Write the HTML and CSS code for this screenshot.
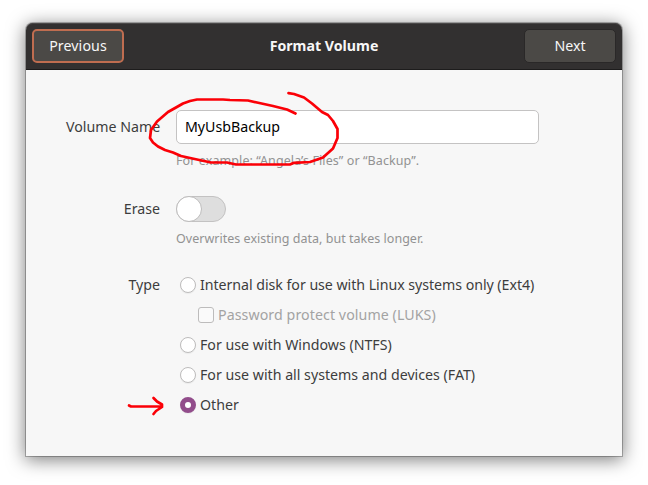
FILE: index.html
```
<!DOCTYPE html>
<html lang="en">
<head>
<meta charset="utf-8">
<title>Format Volume</title>
<link rel="stylesheet" href="styles.css">
</head>
<body>
<main class="window">
  <header class="titlebar">
    <button class="btn btn-focus"><span class="t-prev">Previous</span></button>
    <h1 class="title"><span class="t-title">Format Volume</span></h1>
    <button class="btn"><span class="t-next">Next</span></button>
  </header>
  <section class="form">
    <div class="label label-entry"><span class="t-name">Volume Name</span></div>
    <div class="entry"><span class="t-value">MyUsbBackup</span></div>
    <div class="hint hint-name"><span class="t-hint1">For example: “Angela’s Files” or “Backup”.</span></div>
    <div class="label"><span class="t-erase">Erase</span></div>
    <div class="switch"><div class="knob"></div></div>
    <div class="hint hint-erase"><span class="t-hint2">Overwrites existing data, but takes longer.</span></div>
    <div class="label label-type"><span class="t-type">Type</span></div>
    <div class="options">
      <div class="option"><i class="radio"></i><span class="t-ext">Internal disk for use with Linux systems only (Ext4)</span></div>
      <div class="option nested"><i class="check"></i><span class="t-luks">Password protect volume (LUKS)</span></div>
      <div class="option"><i class="radio"></i><span class="t-ntfs">For use with Windows (NTFS)</span></div>
      <div class="option"><i class="radio"></i><span class="t-fat">For use with all systems and devices (FAT)</span></div>
      <div class="option"><i class="radio selected"></i><span class="t-other">Other</span></div>
    </div>
  </section>
</main>
<svg class="marks" width="648" height="485" viewBox="0 0 648 485">
  <path d="M295.500 113.500L287 109.500 273 106 257 102.500 248 100.500 230 100 223 99.500H197L190 101 183 103.500 176 107.500 168 112 157 121.500 151 130 150 138 153 142.500 158 146.500 165 150 173 152.500 181 156 197 159.500 211 162.500H227L236 164.500H290L294 162.800 310 162 323 157.500 333 148.500 337.500 138V129L333 121 328 115 322 112 312 103.500 304 97.500 294 94 288.500 93.200"/>
  <path d="M129 405.500L131 406.500H161M153.500 398L157 401.500 162 404.500V407L156 411 153.500 414"/>
</svg>
</body>
</html>
```
FILE: styles.css
```
* { box-sizing: border-box; }
body {
  margin: 0;
  width: 648px;
  height: 485px;
  overflow: hidden;
  padding: 23px 26px 0;
  background: #fff;
  color: #3d3d3d;
  font: 14.2px/20px "Noto Sans", sans-serif;
}
.window {
  width: 596px;
  height: 433px;
  border-radius: 7px 7px 0 0;
  background: #f7f7f7;
  box-shadow: 0 0 0 1px rgba(0,0,0,.25), 0 3px 18px 1px rgba(0,0,0,.5);
}
.titlebar {
  display: flex;
  justify-content: space-between;
  align-items: center;
  height: 47px;
  padding: 0 6px 1px;
  border-radius: 7px 7px 0 0;
  border-bottom: 1px solid #1d1c1c;
  background: #323030;
  box-shadow: inset 0 1px #4a4848;
  color: #f7f7f7;
}
.btn {
  display: flex;
  align-items: center;
  justify-content: center;
  width: 92px;
  height: 34px;
  padding: 0;
  border: 1px solid #2a2828;
  border-radius: 5px;
  background: #4b4946;
  color: #f7f7f7;
  font: inherit;
}
.btn-focus { border: 2px solid #bf6d50; }
.title { margin: 0; font-size: 14.2px; font-weight: 700; line-height: 20px; }
.t-prev { letter-spacing: .1px; }
.t-ext { letter-spacing: -.04px; }
.t-luks { letter-spacing: .08px; }
.t-hint1 { letter-spacing: .09px; }
.t-hint2 { letter-spacing: .02px; }
.form {
  display: grid;
  grid-template-columns: 94px 363px;
  column-gap: 16px;
  padding: 40px 0 0 40px;
  align-items: start;
}
.label { text-align: right; line-height: 26px; }
.label-entry { line-height: 34px; }
.label-type { line-height: 30px; }
.entry {
  height: 34px;
  padding: 0 8px;
  border: 1px solid #c4c3c3;
  border-radius: 5px;
  background: #fff;
  color: #000;
  line-height: 32px;
}
.hint { grid-column: 2; color: #929292; font-size: 12.5px; line-height: 18px; }
.hint-name { padding-top: 8px; height: 52px; }
.hint-erase { padding-top: 8px; height: 48px; }
.switch {
  width: 50px;
  height: 26px;
  border: 1px solid #c3c2c2;
  border-radius: 13px;
  background: #dedede;
}
.knob {
  width: 26px;
  height: 26px;
  margin: -1px;
  border: 1px solid #bdbcbc;
  border-radius: 50%;
  background: #fff;
}
.option { display: flex; align-items: center; gap: 4px; height: 30px; padding-left: 4px; white-space: nowrap; }
.nested { padding-left: 22px; color: #a3a3a3; }
.radio, .check {
  width: 16px;
  height: 16px;
  flex: none;
  border: 1px solid #bdbcbc;
  border-radius: 50%;
  background: #fff;
  box-shadow: 0 1px 1px rgba(0,0,0,.05);
}
.check { border-radius: 3px; background: #fafafa; box-shadow: none; }
.selected { border: 5px solid #924d8b; }
span { white-space: nowrap; }
.marks { position: absolute; left: 0; top: 0; pointer-events: none; }
.marks path { fill: none; stroke: #fb0007; stroke-width: 2.7; stroke-linecap: round; stroke-linejoin: round; }
```
